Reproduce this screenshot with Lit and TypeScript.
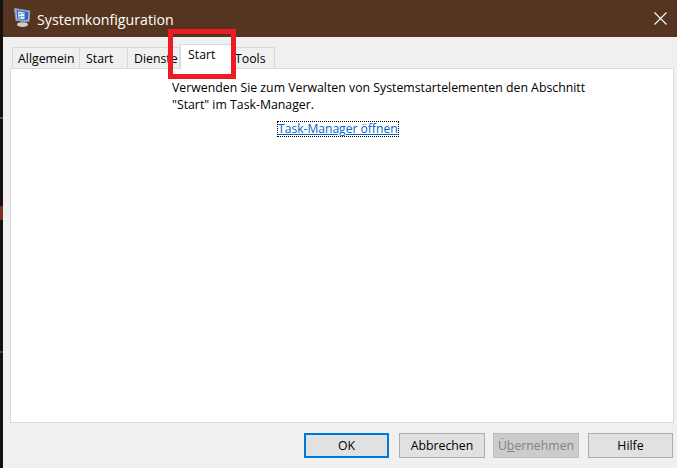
import { LitElement, html, css } from "lit";
import { customElement } from "lit/decorators.js";

@customElement("app-root")
export class AppRoot extends LitElement {
  static styles = css`
    :host { display: block; width: 677px; height: 468px; overflow: hidden; font-family: "Open Sans", "Noto Sans", sans-serif; font-size: 12.3px; color: #000; }
    .desk { display: flex; height: 468px; background: #15110e; position: relative; }
    .strip { width: 3px; flex: none; background: linear-gradient(#15110e 0 25%, #5a5048 25% 25.4%, #15110e 25.4% 44%, #7a3020 44% 47%, #15110e 47% 75%, #4a4038 75% 75.4%, #15110e 75.4%); }
    .win { flex: 1; display: flex; flex-direction: column; background: #f0f0f0; min-width: 0; }
    .title { height: 37px; flex: none; background: #563520; color: #fff; display: flex; align-items: center; padding: 0 10px 0 10px; font-size: 14.2px; }
    .title .ico { width: 18px; height: 21px; margin-right: 6px; margin-top: -2px; flex: none; }
    .title span { flex: 1; margin-top: 1px; }
    .title .x { width: 13px; height: 13px; flex: none; }
    .tabs { height: 31px; flex: none; display: flex; align-items: flex-end; padding-left: 9px; position: relative; z-index: 1; }
    .tab { height: 21px; box-sizing: border-box; border: 1px solid #d9d9d9; border-bottom: none; border-left: none; background: #f0f0f0; display: flex; align-items: center; padding: 0 0 0 6px; white-space: nowrap; overflow: hidden; }
    .tab.first { border-left: 1px solid #d9d9d9; padding-left: 5px; }
    .tab.on { height: 25px; background: #fff; border-left: 1px solid #d9d9d9; margin-bottom: -1px; padding: 0 0 5px 7px; }
    .tab.last { padding-left: 2px; }
    .panel { height: 355px; flex: none; box-sizing: border-box; margin: 0 3px 0 7px; background: #fff; border: 1px solid #d9d9d9; padding: 10px 0 0 161px; line-height: 17px; }
    .panel p { margin: 0; }
    .link { display: block; width: fit-content; margin: 9px 0 0 106px; line-height: 14px; font-size: 12.1px; color: #0066cc; text-decoration: underline; outline: 1px dotted #000; }
    .foot { flex: 1; display: flex; padding: 10px 4px 0 0; justify-content: flex-end; align-items: flex-start; }
    .btn { height: 25px; box-sizing: border-box; border: 1px solid #adadad; background: #e1e1e1; display: flex; align-items: center; justify-content: center; font-size: 12.3px; }
    .ok { width: 85px; border: 2px solid #0078d7; margin-right: 10px; }
    .ab { width: 86px; margin-right: 8px; }
    .ue { width: 86px; margin-right: 9px; background: #cccccc; border-color: #bfbfbf; color: #838383; }
    .hi { width: 85px; }
    .mark { position: absolute; left: 168px; top: 29px; width: 68px; height: 50px; box-sizing: border-box; border: 5px solid #ed1c24; z-index: 2; }
    u { text-decoration-thickness: 1px; }
  `;

  render() {
    return html`
      <div class="desk">
        <div class="strip"></div>
        <div class="win">
          <div class="title">
            <svg class="ico" viewBox="0 0 18 21">
              <ellipse cx="9.5" cy="17.5" rx="5.5" ry="2.5" fill="#cfcfcf"/>
              <rect x="8" y="13" width="4" height="3" fill="#9a9a9a"/>
              <path d="M1.5 1.5 L17 4 L16 14.5 L3 13.5 Z" fill="#b4c0d4" stroke="#8391ab" stroke-width="1"/>
              <path d="M3.5 3 L15.5 5 L14.8 13 L4.3 12.2 Z" fill="#2f5fc4"/>
              <path d="M5 4.5 L11.5 5.5 L11.5 12 L5.5 11.5 Z" fill="#eef4fc"/>
              <path d="M6 6h2.2v1.6H6zM6.2 9h2.2v1.6H6.2z" fill="#3f8fe0"/>
              <path d="M9 6.5h2M9 9.5h2" stroke="#7aa5d8" stroke-width="1"/>
            </svg>
            <span>Systemkonfiguration</span>
            <svg class="x" viewBox="0 0 13 13"><path d="M.5.5l12 12M12.5.5l-12 12" stroke="#fff" stroke-width="1.1" fill="none"/></svg>
          </div>
          <div class="tabs">
            <div class="tab first" style="width:68px">Allgemein</div>
            <div class="tab" style="width:48px">Start</div>
            <div class="tab" style="width:52px">Dienste</div>
            <div class="tab on" style="width:53px">Start</div>
            <div class="tab last" style="width:42px">Tools</div>
          </div>
          <div class="panel">
            <p>Verwenden Sie zum Verwalten von Systemstartelementen den Abschnitt<br />"Start" im Task-Manager.</p>
            <a class="link">Task-Manager öffnen</a>
          </div>
          <div class="foot">
            <div class="btn ok">OK</div>
            <div class="btn ab">Abbrechen</div>
            <div class="btn ue"><span>Ü<u>b</u>ernehmen</span></div>
            <div class="btn hi">Hilfe</div>
          </div>
        </div>
        <div class="mark"></div>
      </div>
    `;
  }
}
